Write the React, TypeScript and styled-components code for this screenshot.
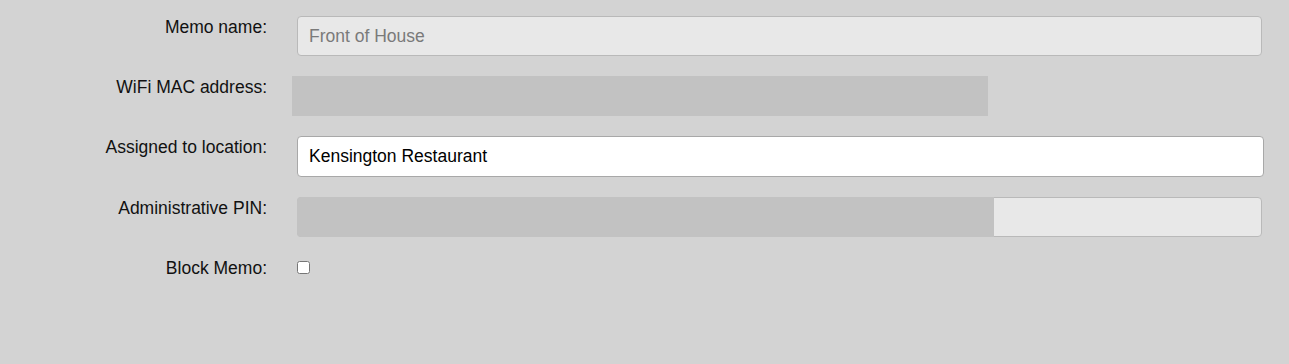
import React from 'react'
import styled, {createGlobalStyle} from 'styled-components'

const GlobalStyle = createGlobalStyle`
    html, body {
        margin: 0;
        padding: 0;
        background: #d3d3d3;
        font-family: "Liberation Sans", Arial, sans-serif;
    }
`

const rows = {
    memoName: 'Front of House',
    location: 'Kensington Restaurant',
}

const App: React.FC = () => {
    return (
        <>
            <GlobalStyle/>
            <StyledPage>
                <StyledForm>
                    <StyledRow>
                        <StyledLabel>Memo name:</StyledLabel>
                        <StyledInput type="text" disabled $muted defaultValue={rows.memoName}/>
                    </StyledRow>

                    <StyledRow>
                        <StyledLabel>WiFi MAC address:</StyledLabel>
                        <StyledSkeleton/>
                    </StyledRow>

                    <StyledRow>
                        <StyledLabel>Assigned to location:</StyledLabel>
                        <StyledInput type="text" $tall defaultValue={rows.location}/>
                    </StyledRow>

                    <StyledRow>
                        <StyledLabel>Administrative PIN:</StyledLabel>
                        <StyledFieldWrap>
                            <StyledInput type="text" disabled $muted/>
                            {/* загрузка PIN */}
                            <StyledOverlay/>
                        </StyledFieldWrap>
                    </StyledRow>

                    <StyledRow>
                        <StyledLabel>Block Memo:</StyledLabel>
                        <StyledCheckbox type="checkbox"/>
                    </StyledRow>
                </StyledForm>
            </StyledPage>
        </>
    )
}
export default App

const StyledPage = styled.div`
    width: 1289px;
    height: 364px;
    background: #d3d3d3;
    box-sizing: border-box;
    padding: 16px 27px 0 0;
`

const StyledForm = styled.div`
    display: flex;
    flex-direction: column;
    gap: 20px;
`

const StyledRow = styled.div`
    display: grid;
    grid-template-columns: 267px 1fr;
    column-gap: 30px;
    align-items: start;
`

const StyledLabel = styled.label`
    text-align: right;
    white-space: nowrap;
    font-size: 17.5px;
    line-height: 18px;
    color: #111;
    padding-top: 2px;
`

const StyledInput = styled.input<{$muted?: boolean, $tall?: boolean}>`
    box-sizing: border-box;
    width: ${({$tall}) => $tall ? 'calc(100% + 2px)' : '100%'};
    height: ${({$tall}) => $tall ? '41px' : '40px'};
    margin: 0;
    padding: 0 11px;
    border-radius: 4px;
    border: 1px solid ${({$muted}) => $muted ? '#b9b9b9' : '#a8a8a8'};
    background: ${({$muted}) => $muted ? '#e8e8e8' : '#ffffff'};
    font-family: "Liberation Sans", Arial, sans-serif;
    font-size: 17.5px;
    color: ${({$muted}) => $muted ? '#7a7a7a' : '#000'};
    -webkit-text-fill-color: ${({$muted}) => $muted ? '#7a7a7a' : '#000'};
    opacity: 1;
    outline: none;
`

const StyledSkeleton = styled.div`
    width: 696px;
    height: 40px;
    margin-left: -5px;
    background: #c2c2c2;
`

const StyledFieldWrap = styled.div`
    position: relative;
    height: 40px;
`

const StyledOverlay = styled.div`
    position: absolute;
    left: 0;
    top: 0;
    width: 697px;
    height: 40px;
    border-radius: 4px 0 0 4px;
    background: #c2c2c2;
`

const StyledCheckbox = styled.input`
    width: 13px;
    height: 13px;
    margin: 4px 0 0 0;
`
